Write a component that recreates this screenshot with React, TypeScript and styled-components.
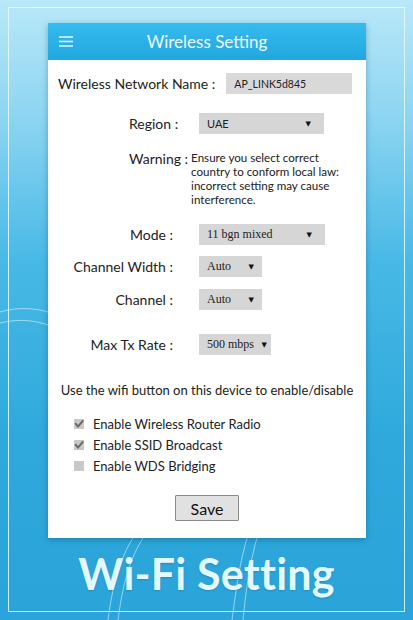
import * as React from 'react';
import styled, {createGlobalStyle} from 'styled-components';

const GlobalStyle = createGlobalStyle`
    html, body {
        margin: 0;
        padding: 0;
    }
    body {
        font-family: Lato, "Open Sans", "Liberation Sans", sans-serif;
        color: #222;
    }
`;

const Page = styled.div`
    position: relative;
    width: 413px;
    height: 620px;
    overflow: hidden;
    box-sizing: border-box;
    padding: 7px 8px 8px 8px;
    background: linear-gradient(180deg, #b9e8f8 0%, #8fd6f2 18%, #48b9e6 42%, #2fa9dc 70%, #2aa4d9 100%);
`;

const Decor = styled.svg`
    position: absolute;
    left: 0;
    top: 0;
    pointer-events: none;
`;

const Frame = styled.div`
    position: relative;
    height: 100%;
    box-sizing: border-box;
    border: 1.5px solid rgba(230, 250, 255, 0.85);
    display: flex;
    flex-direction: column;
    align-items: flex-start;
    padding: 15px 0 0 39px;
`;

const Card = styled.div`
    width: 318px;
    background: #fff;
    box-shadow: 0 2px 6px rgba(0, 60, 100, 0.35);
    display: flex;
    flex-direction: column;
`;

const Header = styled.div`
    position: relative;
    height: 37px;
    display: flex;
    align-items: center;
    justify-content: center;
    background: linear-gradient(180deg, #36bbee 0%, #21a7de 100%);
    color: #eefaff;
    font-size: 17px;
`;

const MenuIcon = styled.svg`
    position: absolute;
    left: 11px;
    top: 12px;
`;

const Body = styled.div`
    display: flex;
    flex-direction: column;
    padding: 0 0 17px 0;
`;

const NameRow = styled.div`
    display: flex;
    align-items: center;
    margin-top: 13px;
    padding-left: 10px;
    font-size: 14px;
`;

const NameInput = styled.div`
    margin-left: 11px;
    width: 118px;
    height: 21px;
    padding-left: 8px;
    background: #d9d9d9;
    display: flex;
    align-items: center;
    font-size: 10.5px;
    color: #222;
`;

const FormRow = styled.div<{ $mt: number }>`
    display: grid;
    grid-template-columns: 125px auto;
    column-gap: 26px;
    align-items: center;
    margin-top: ${p => p.$mt}px;
    font-size: 14px;
`;

const Label = styled.div<{ $left?: boolean }>`
    text-align: ${p => p.$left ? 'left' : 'right'};
    padding-left: ${p => p.$left ? '81px' : '0'};
    white-space: nowrap;
`;

const SelectBox = styled.div<{ $w: number; $serif?: boolean; $pr: number }>`
    width: ${p => p.$w}px;
    height: 21px;
    box-sizing: border-box;
    padding: 0 ${p => p.$pr}px 0 8px;
    background: #d6d6d6;
    display: flex;
    align-items: center;
    justify-content: space-between;
    font-family: ${p => p.$serif ? '"Liberation Serif", "DejaVu Serif", serif' : 'Lato, "Liberation Sans", sans-serif'};
    font-size: ${p => p.$serif ? '12px' : '11px'};
    color: #222;
`;

const Arrow = styled.span`
    font-size: 7px;
    color: #111;
    font-family: "DejaVu Sans", sans-serif;
`;

const WarningRow = styled.div`
    display: flex;
    align-items: flex-start;
    margin-top: 16px;
    padding-left: 81px;
    font-size: 14px;
`;

const WarningText = styled.div`
    margin-left: 3px;
    width: 162px;
    font-size: 11.6px;
    line-height: 14px;
    padding-top: 1px;
    color: #222;
`;

const Hint = styled.div`
    margin-top: 26px;
    text-align: center;
    font-size: 13px;
    line-height: 18px;
`;

const Checks = styled.div`
    display: flex;
    flex-direction: column;
    margin-top: 14px;
    padding-left: 26px;
`;

const CheckRow = styled.div`
    display: flex;
    align-items: center;
    height: 21px;
    font-size: 13px;
`;

const Box = styled.span`
    width: 10px;
    height: 10px;
    background: #c8c8c8;
    margin-right: 9px;
    display: inline-flex;
    align-items: center;
    justify-content: center;
`;

const SaveButton = styled.button`
    align-self: center;
    margin-top: 19px;
    width: 64px;
    height: 26px;
    background: #e1e1e1;
    border: 1px solid #8a8a8a;
    border-radius: 1px;
    font-family: Lato, "Liberation Sans", sans-serif;
    font-size: 16px;
    color: #111;
    padding: 0;
`;

const BigTitle = styled.div`
    align-self: stretch;
    margin-left: -39px;
    margin-top: 10px;
    text-align: center;
    font-size: 43px;
    font-weight: 700;
    color: #e4f8ff;
    letter-spacing: 0.2px;
    text-shadow: 0 1px 2px rgba(0, 70, 120, 0.25);
`;

const CheckMark: React.FC = () => (
    <svg width="10" height="10" viewBox="0 0 10 10">
        <path d="M1.2 4.2 L4 7.6 L9.2 1.4" stroke="#666" strokeWidth="1.9" fill="none"/>
    </svg>
);

const Select: React.FC<{ w: number; serif?: boolean; pr?: number; value: string }> = ({w, serif, pr = 10, value}) => (
    <SelectBox $w={w} $serif={serif} $pr={pr}>
        <span>{value}</span>
        <Arrow>▼</Arrow>
    </SelectBox>
);

const checks = [
    {label: 'Enable Wireless Router Radio', checked: true},
    {label: 'Enable SSID Broadcast', checked: true},
    {label: 'Enable WDS Bridging', checked: false},
];

export default function App() {
    return (
        <>
            <GlobalStyle/>
            <Page>
                <Decor width="413" height="620" viewBox="0 0 413 620">
                    <g fill="none" stroke="rgba(235,250,255,0.55)" strokeWidth="1">
                        <path d="M0 312 C 20 306, 40 308, 60 316"/>
                        <path d="M0 323 C 20 318, 40 320, 60 330"/>
                        <path d="M108 620 C 112 590, 118 560, 135 535"/>
                        <path d="M118 620 C 122 590, 128 560, 145 535"/>
                        <path d="M232 620 C 236 590, 240 560, 248 535"/>
                        <path d="M243 620 C 246 590, 250 560, 258 535"/>
                    </g>
                </Decor>
                <Frame>
                    <Card>
                        <Header>
                            <MenuIcon width="14" height="12" viewBox="0 0 14 12">
                                <g stroke="#d8f3ff" strokeWidth="1.6">
                                    <line x1="0" y1="2" x2="14" y2="2"/>
                                    <line x1="0" y1="6.5" x2="14" y2="6.5"/>
                                    <line x1="0" y1="11" x2="14" y2="11"/>
                                </g>
                            </MenuIcon>
                            Wireless Setting
                        </Header>
                        <Body>
                            <NameRow>
                                Wireless Network Name :
                                <NameInput>AP_LINK5d845</NameInput>
                            </NameRow>
                            <FormRow $mt={19}>
                                <Label $left>Region :</Label>
                                <Select w={125} pr={13} value="UAE"/>
                            </FormRow>
                            <WarningRow>
                                Warning :
                                <WarningText>
                                    Ensure you select correct country to conform local law: incorrect setting may cause interference.
                                </WarningText>
                            </WarningRow>
                            <FormRow $mt={17}>
                                <Label>Mode :</Label>
                                <Select w={126} serif pr={13} value="11 bgn mixed"/>
                            </FormRow>
                            <FormRow $mt={11}>
                                <Label>Channel Width :</Label>
                                <Select w={63} serif pr={8} value="Auto"/>
                            </FormRow>
                            <FormRow $mt={12}>
                                <Label>Channel :</Label>
                                <Select w={63} serif pr={8} value="Auto"/>
                            </FormRow>
                            <FormRow $mt={24}>
                                <Label>Max Tx Rate :</Label>
                                <Select w={72} serif pr={4} value="500 mbps"/>
                            </FormRow>
                            <Hint>Use the wifi button on this device to enable/disable</Hint>
                            <Checks>
                                {checks.map(c => (
                                    <CheckRow key={c.label}>
                                        <Box>{c.checked && <CheckMark/>}</Box>
                                        {c.label}
                                    </CheckRow>
                                ))}
                            </Checks>
                            <SaveButton>Save</SaveButton>
                        </Body>
                    </Card>
                    <BigTitle>Wi-Fi Setting</BigTitle>
                </Frame>
            </Page>
        </>
    );
}
